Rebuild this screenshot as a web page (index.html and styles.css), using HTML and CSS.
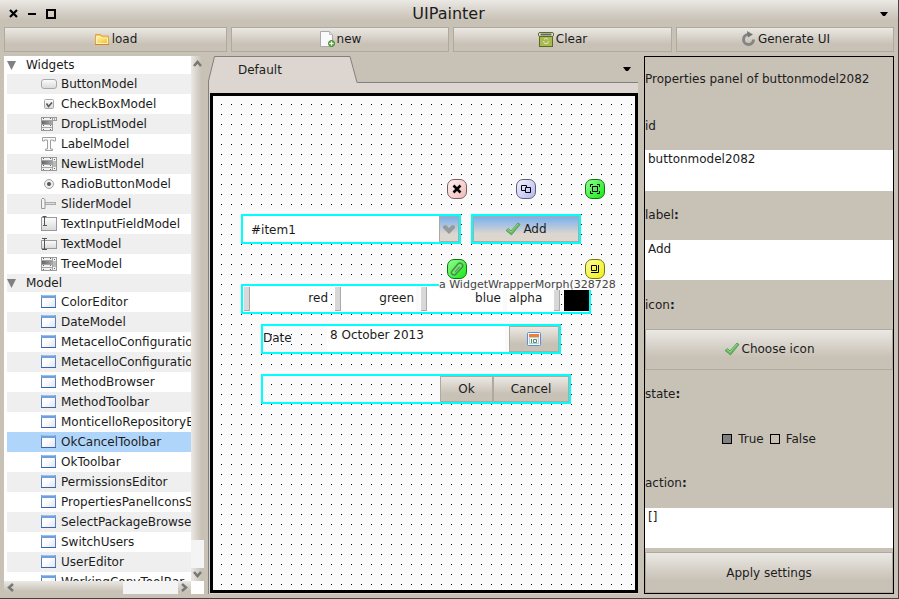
FILE: index.html
```html
<!DOCTYPE html>
<html lang="en">
<head>
<meta charset="utf-8">
<title>UIPainter</title>
<link rel="stylesheet" href="styles.css">
</head>
<body>
<svg class="defs" aria-hidden="true">
  <defs>
    <linearGradient id="silver" x1="0" y1="0" x2="0" y2="1"><stop offset="0" stop-color="#fdfdfd"/><stop offset="1" stop-color="#d8d8d8"/></linearGradient>
    <linearGradient id="pane" x1="0" y1="0" x2="1" y2="1"><stop offset="0" stop-color="#fff"/><stop offset="0.4" stop-color="#fff"/><stop offset="1" stop-color="#dde4f5"/></linearGradient>
    <linearGradient id="gold" x1="0" y1="0" x2="1" y2="1"><stop offset="0" stop-color="#fff3a8"/><stop offset="1" stop-color="#f5c02c"/></linearGradient>
    <linearGradient id="bar" x1="0" y1="0" x2="1" y2="0"><stop offset="0" stop-color="#666"/><stop offset="1" stop-color="#aaa"/></linearGradient>
  </defs>
  <symbol id="i-button" viewBox="0 0 16 16"><rect x="0.5" y="3.5" width="15" height="9" rx="2.5" fill="url(#silver)" stroke="#a8a8a8"/></symbol>
  <symbol id="i-check" viewBox="0 0 16 16"><rect x="3.5" y="3.5" width="9" height="9" rx="1" fill="url(#silver)" stroke="#a8a8a8"/><path d="M5.5 7.5l2 3 3.5-4" fill="none" stroke="#555" stroke-width="1.5"/></symbol>
  <symbol id="i-list" viewBox="0 0 16 16"><rect x="0.5" y="1.5" width="15" height="13" fill="#f2f2f2" stroke="#999"/><rect x="12" y="5" width="3" height="6" fill="#bbb"/><rect x="1" y="5" width="11" height="3" fill="url(#bar)"/><path d="M1 4.500h11M1 8.500h11M1 11.500h11M11.500 2v12" stroke="#a4a4a4"/><path d="M2 2.500h1M2 9.500h1M2 13.500h1M9 2.500h1M9 9.500h1M9 13.500h1M13 3.500h1M13 12.500h1" stroke="#666"/></symbol>
  <symbol id="i-drop" viewBox="0 0 16 16"><rect x="0.5" y="1.5" width="11" height="13" fill="#f2f2f2" stroke="#999"/><rect x="11.5" y="1.5" width="4" height="3" fill="#eee" stroke="#999"/><rect x="1" y="5" width="10" height="3" fill="url(#bar)"/><path d="M1 4.500h11M1 8.500h10M1 11.500h10" stroke="#a4a4a4"/><path d="M2 2.500h1M2 9.500h1M2 13.500h1M9 2.500h1M9 9.500h1M9 13.500h1M13 3h1" stroke="#666"/></symbol>
  <symbol id="i-label" viewBox="0 0 16 16"><path d="M1.500 1.500h13v3.500h-2v-1h-3v9h2v1.500h-7v-1.500h2v-9h-3v1h-2z" fill="#fafafa" stroke="#a0a0a0"/></symbol>
  <symbol id="i-radio" viewBox="0 0 16 16"><circle cx="8" cy="8" r="4.5" fill="#eee" stroke="#a0a0a0"/><circle cx="8" cy="8" r="2" fill="#555"/></symbol>
  <symbol id="i-slider" viewBox="0 0 16 16"><path d="M0.500 3.500l1.500-1.500 2 1.500v9h-3.500z" fill="#f4f4f4" stroke="#999"/><rect x="4.5" y="6.5" width="10" height="2" fill="#ddd" stroke="#aaa"/></symbol>
  <symbol id="i-field" viewBox="0 0 16 16"><rect x="0.5" y="1.5" width="15" height="13" fill="url(#silver)" stroke="#999"/><path d="M1.500 0.500h4M3.500 1v8M2 9.500h4" fill="none" stroke="#555"/></symbol>
  <symbol id="i-text" viewBox="0 0 16 16"><rect x="0.5" y="4.5" width="15" height="8" fill="url(#silver)" stroke="#999"/><path d="M1 2.500h5M3.500 3v10M1 13.500h5" fill="none" stroke="#555"/></symbol>
  <symbol id="i-window" viewBox="0 0 16 16"><rect x="0.5" y="1.5" width="14" height="12" fill="url(#pane)" stroke="#5a7fb8"/><rect x="0" y="1" width="15" height="3" fill="#6f9fdc"/><path d="M1 1.500h13" stroke="#9ec0ec"/><path d="M0 13.500h15" stroke="#3f62a0"/></symbol>
  <symbol id="i-tick" viewBox="0 0 16 16"><path d="M1 9.500l2.500-2 2.500 2.500 7-8 2 1.500-8.500 10.500z" fill="#68bd60" stroke="#3f8f40" stroke-width="0.7"/><path d="M2.500 9l1-.5 2.500 2.500 7-8" fill="none" stroke="#a5dc9d" stroke-width="0.7"/></symbol>
</svg>

<div class="window">
  <header class="titlebar">
    <div class="controls">
      <button type="button" aria-label="Close"><svg width="9" height="9" viewBox="0 0 9 9"><path d="M1 1l7 7M8 1l-7 7" stroke="#000" stroke-width="2.200"/></svg></button>
      <button type="button" aria-label="Minimize"><svg width="8" height="8" viewBox="0 0 8 8"><path d="M0 4h8" stroke="#000" stroke-width="2"/></svg></button>
      <button type="button" aria-label="Maximize"><svg width="10" height="10" viewBox="0 0 10 10"><rect x="1" y="1" width="8" height="8" fill="none" stroke="#000" stroke-width="2"/></svg></button>
    </div>
    <h1>UIPainter</h1>
    <button type="button" class="menu" aria-label="Window menu"><svg width="8" height="4" viewBox="0 0 8 4"><path d="M0 0h8l-3 4h-2z"/></svg></button>
  </header>

  <nav class="toolbar">
    <button type="button" class="btn"><svg width="16" height="16" viewBox="0 0 16 16"><path d="M1.500 3.500h5l1 1.500h7v8.500h-13z" fill="#f3c95c" stroke="#e0a83c"/><path d="M2.500 5.500h4l1.500 1.500h5.500v5.500h-11z" fill="url(#gold)" stroke="#fff1b8"/><path d="M1 13.500h14" stroke="#d5832a"/></svg>load</button>
    <button type="button" class="btn"><svg width="16" height="16" viewBox="0 0 16 16"><path d="M1.500 .5h9l3 3v12h-12z" fill="#fafafa" stroke="#aaa"/><path d="M10.500 .5v3h3" fill="#ddd" stroke="#bbb"/><circle cx="12.5" cy="12.5" r="3" fill="#78b860" stroke="#3d7f2e"/><path d="M10.500 12.500h4M12.500 10.500v4" stroke="#fff"/></svg>new</button>
    <button type="button" class="btn"><svg width="16" height="16" viewBox="0 0 16 16"><rect x="1.5" y="4.5" width="13" height="11" fill="#a9ba50" stroke="#5c6b23"/><rect x="0.5" y="1.5" width="15" height="4" rx="1.5" fill="#e8ecd8" stroke="#5c6b23"/><path d="M2.500 3.500h11" stroke="#666" stroke-width="2"/><path d="M6 8.500l2-1.500 2 1.500M10.500 10l-1 2.500h-3l-1-2.500" fill="none" stroke="#e0e8b0"/></svg>Clear</button>
    <button type="button" class="btn"><svg width="16" height="16" viewBox="0 0 16 16"><path d="M8 3.500a5 5 0 1 0 5.500 5" fill="none" stroke="#858585" stroke-width="3"/><path d="M7 0l6 3.500-5 3z" fill="#777"/></svg>Generate UI</button>
  </nav>

  <main class="panes">
    <section class="browser" aria-label="Components">
      <div class="tree">
        <ul class="items">
          <li class="group"><svg width="10" height="9" viewBox="0 0 10 9"><path d="M0 0h9l-4.500 9z" fill="#808080"/></svg>Widgets</li>
          <li><svg><use href="#i-button"/></svg>ButtonModel</li>
          <li><svg><use href="#i-check"/></svg>CheckBoxModel</li>
          <li><svg><use href="#i-drop"/></svg>DropListModel</li>
          <li><svg><use href="#i-label"/></svg>LabelModel</li>
          <li><svg><use href="#i-list"/></svg>NewListModel</li>
          <li><svg><use href="#i-radio"/></svg>RadioButtonModel</li>
          <li><svg><use href="#i-slider"/></svg>SliderModel</li>
          <li><svg><use href="#i-field"/></svg>TextInputFieldModel</li>
          <li><svg><use href="#i-text"/></svg>TextModel</li>
          <li><svg><use href="#i-list"/></svg>TreeModel</li>
          <li class="group"><svg width="10" height="9" viewBox="0 0 10 9"><path d="M0 0h9l-4.500 9z" fill="#808080"/></svg>Model</li>
          <li><svg><use href="#i-window"/></svg>ColorEditor</li>
          <li><svg><use href="#i-window"/></svg>DateModel</li>
          <li><svg><use href="#i-window"/></svg>MetacelloConfigurationBrowser</li>
          <li><svg><use href="#i-window"/></svg>MetacelloConfigurationEditor</li>
          <li><svg><use href="#i-window"/></svg>MethodBrowser</li>
          <li><svg><use href="#i-window"/></svg>MethodToolbar</li>
          <li><svg><use href="#i-window"/></svg>MonticelloRepositoryBrowser</li>
          <li class="selected"><svg><use href="#i-window"/></svg>OkCancelToolbar</li>
          <li><svg><use href="#i-window"/></svg>OkToolbar</li>
          <li><svg><use href="#i-window"/></svg>PermissionsEditor</li>
          <li><svg><use href="#i-window"/></svg>PropertiesPanelIconsSelector</li>
          <li><svg><use href="#i-window"/></svg>SelectPackageBrowser</li>
          <li><svg><use href="#i-window"/></svg>SwitchUsers</li>
          <li><svg><use href="#i-window"/></svg>UserEditor</li>
          <li><svg><use href="#i-window"/></svg>WorkingCopyToolBar</li>
        </ul>
      </div>
      <div class="vscroll">
        <svg width="9" height="7" viewBox="0 0 9 7"><path d="M1 6l3.500-4 3.500 4" fill="none" stroke="#777" stroke-width="2.500"/></svg>
        <span class="thumb"></span>
        <svg width="9" height="7" viewBox="0 0 9 7"><path d="M1 1l3.500 4 3.500-4" fill="none" stroke="#777" stroke-width="2.500"/></svg>
      </div>
      <div class="hscroll">
        <svg width="7" height="9" viewBox="0 0 7 9"><path d="M6 1l-4 3.500 4 3.500" fill="none" stroke="#777" stroke-width="2.500"/></svg>
        <span class="thumb"></span>
        <svg width="7" height="9" viewBox="0 0 7 9"><path d="M1 1l4 3.500-4 3.500" fill="none" stroke="#777" stroke-width="2.500"/></svg>
      </div>
      <div class="corner"></div>
    </section>

    <section class="editor" aria-label="Canvas">
      <div class="tabs">
        <button type="button" class="tab"><svg width="150" height="27" viewBox="0 0 150 27"><path d="M0.500 27v-2l6-24.500h135.500l7 25.500v1z" fill="#ddd6d0"/><path d="M0.500 27v-2l6-24.500h135.500l7 26h1" fill="none" stroke="#808080"/></svg><span>Default</span></button>
        <button type="button" class="menu" aria-label="Tab menu"><svg width="8" height="4" viewBox="0 0 8 4"><path d="M0 0h8l-3 4h-2z"/></svg></button>
      </div>
      <div class="page">
        <div class="canvas">
          <div class="morph m-drop">
            <select aria-label="Item"><option>#item1</option></select>
            <span class="droparrow"><svg width="12" height="9" viewBox="0 0 12 9"><path d="M0 1l3-1 3 3 3-3 3 1v2l-6 6-6-6z" fill="#999"/></svg></span>
          </div>
          <div class="morph m-add"><button type="button" class="btn blue"><svg width="16" height="16"><use href="#i-tick"/></svg>Add</button></div>
          <div class="morph m-color">
            <label class="slide">red<input type="range" value="0"></label>
            <label class="slide">green<input type="range" value="0"></label>
            <label class="slide">blue<input type="range" value="0"></label>
            <label class="slide start">alpha<input type="range" value="100"></label>
            <span class="swatch"></span>
          </div>
          <div class="morph m-date">
            <label for="date">Date</label>
            <input id="date" type="text" value="8 October 2013">
            <button type="button" class="btn" aria-label="Pick a date"><svg width="14" height="14" viewBox="0 0 14 14"><rect x="0.5" y="0.5" width="13" height="13" rx="1" fill="#f2f7ff" stroke="#5d8fd0"/><rect x="2" y="2" width="10" height="3" fill="#f08038"/><path d="M2 5.500h10M2 11.500h10M2.500 5v6.500M11.500 5v6.500" stroke="#bdccd8"/><path d="M4.500 7v4M6.500 7.500h3v3h-3z" fill="none" stroke="#4c9350"/></svg></button>
          </div>
          <div class="morph m-ok">
            <button type="button" class="btn ok">Ok</button>
            <button type="button" class="btn cancel">Cancel</button>
          </div>
          <button type="button" class="halo h-close" aria-label="Delete"><svg width="10" height="10" viewBox="0 0 10 10"><path d="M1.500 1.500l7 7M8.500 1.500l-7 7" stroke="#000" stroke-width="2.500"/></svg></button>
          <button type="button" class="halo h-copy" aria-label="Duplicate"><svg width="12" height="10" viewBox="0 0 12 10"><path d="M5.500 6.500h-4v-5h5v2M5.500 3.500h5v5h-5z" fill="none" stroke="#000"/></svg></button>
          <button type="button" class="halo h-size" aria-label="Resize"><svg width="10" height="10" viewBox="0 0 10 10"><path d="M2.500 2.500h5v5h-5zM.5 3v-2.500h2.500M7 .5h2.500v2.500M9.500 7v2.500h-2.500M3 9.500h-2.500v-2.500" fill="none" stroke="#000"/></svg></button>
          <button type="button" class="halo h-edit" aria-label="Attach"><svg width="14" height="14" viewBox="0 0 14 14"><path d="M2 12a2 2 0 0 1 0-3l6-7a2.500 2.500 0 0 1 4 3.500l-6 6.500a2.500 2.500 0 0 1-4 0zM4.500 10l5-5.500" fill="none" stroke="#4c8a4c" stroke-width="1.500"/><path d="M3 11l7-8" stroke="#a8d8a8"/></svg></button>
          <button type="button" class="halo h-scale" aria-label="Scale"><svg width="10" height="10" viewBox="0 0 10 10"><path d="M1.500 1.500h5v5h-5zM8.500 1v7.500h-7.500" fill="none" stroke="#000"/></svg></button>
          <span class="caption">a WidgetWrapperMorph(328728</span>
        </div>
      </div>
    </section>

    <form class="props">
      <h2>Properties panel of buttonmodel2082</h2>
      <label for="p-id">id</label>
      <textarea id="p-id">buttonmodel2082</textarea>
      <label for="p-label">label<b>:</b></label>
      <textarea id="p-label">Add</textarea>
      <span class="cap">icon<b>:</b></span>
      <button type="button" class="btn"><svg width="16" height="16"><use href="#i-tick"/></svg>Choose icon</button>
      <span class="cap">state<b>:</b></span>
      <div class="choices">
        <label><input type="radio" name="state" checked>True</label>
        <label><input type="radio" name="state">False</label>
      </div>
      <label for="p-action">action<b>:</b></label>
      <textarea id="p-action">[]</textarea>
      <button type="button" class="btn">Apply settings</button>
    </form>
  </main>
</div>
</body>
</html>
```
FILE: styles.css
```css
* { box-sizing: border-box; }

body {
  margin: 0;
  font: 12px/20px "DejaVu Sans", sans-serif;
  color: #1c1c1c;
}

button, input, select, textarea {
  margin: 0;
  padding: 0;
  border: 0;
  border-radius: 0;
  background: none;
  font: inherit;
  color: inherit;
}

.defs { position: absolute; width: 0; height: 0; }

.window {
  height: 100vh;
  display: flex;
  flex-direction: column;
  background: linear-gradient(#ebe9e4, #c8c1b6 20px);
  border-right: 1px solid #444;
  border-bottom: 1px solid #444;
}

.titlebar {
  flex: none;
  height: 27px;
  padding: 0 10px 0 9px;
  display: grid;
  grid-template-columns: 1fr auto 1fr;
  align-items: center;
}
.titlebar button { display: flex; align-items: center; }
.titlebar .menu { justify-self: end; }
.controls { display: flex; gap: 10px; }
h1 { margin: 0; font-size: 16px; font-weight: normal; }

.toolbar {
  flex: none;
  height: 25px;
  margin: 0 4px 4px;
  display: grid;
  grid-template-columns: 223fr 218fr 219fr 218fr;
  gap: 4px;
}

.btn {
  display: flex;
  align-items: center;
  justify-content: center;
  gap: 2px;
  border: 1px solid #b0a99e;
  background: linear-gradient(#ebe9e4, #c8c1b6 70%);
}
.toolbar .btn { padding-bottom: 2px; }
.btn.blue { background: linear-gradient(#78b0f0, #dcd6cf 70%); }

.panes {
  flex: 1;
  min-height: 0;
  margin: 0 4px 4px;
  display: grid;
  grid-template-columns: 200px 1fr 250px;
}

.browser {
  min-height: 0;
  display: grid;
  grid-template: 1fr 13px / 1fr 13px;
}
.tree { overflow: hidden; padding-left: 3px; background: #fff; }
.items { margin: 0; padding: 0; list-style: none; }
.items li {
  height: 20px;
  padding-left: 34px;
  display: flex;
  align-items: center;
  gap: 4px;
  white-space: nowrap;
}
.items li svg { flex: none; width: 16px; height: 16px; }
.items li:nth-child(even) { background: #efefef; }
.items li.group { height: 18px; padding-left: 0; gap: 9px; }
.items li.group svg { width: 10px; height: 9px; }
.items li.selected { background: #b0d5fa; }

.vscroll, .hscroll { display: flex; align-items: center; justify-content: space-between; }
.vscroll {
  flex-direction: column;
  padding: 4px 0 3px;
  background: linear-gradient(90deg, #ebe9e4, #c8c1b6 80%);
}
.vscroll .thumb { width: 13px; height: 28px; margin: auto 0 3px; background: #f4f4f4; }
.hscroll { padding: 0 3px; background: linear-gradient(#ebe9e4, #c8c1b6 80%); }
.hscroll .thumb { width: 55px; height: 13px; margin: 0 3px 0 auto; background: #f4f4f4; }
.corner { background: #fff; }

.editor { margin: 0 6px 0 4px; display: flex; flex-direction: column; }
.tabs {
  flex: none;
  height: 27px;
  display: flex;
  align-items: center;
  justify-content: space-between;
  border-bottom: 1px solid #808080;
}
.tab { display: grid; align-self: flex-start; text-align: left; }
.tab svg, .tab span { grid-area: 1 / 1; }
.tab span { padding: 4px 0 0 30px; }
.tabs .menu { display: flex; padding: 0 7px 0 4px; }
.page {
  flex: 1;
  display: flex;
  padding: 10px 0 1px 1px;
  background: #ddd6d0;
  border-left: 1px solid #808080;
}
.canvas {
  flex: 1;
  position: relative;
  border: 3px solid #000;
  background:
    linear-gradient(90deg, transparent 1px, #fafafa 1px) 8px 8px / 10px 10px,
    linear-gradient(#000 1px, #fafafa 1px) 8px 8px / 10px 10px;
}

.morph { position: absolute; height: 30px; display: flex; border: 2px solid #0ff; }
.m-drop { left: 28px; top: 118px; width: 220px; background: #fff; }
.m-drop select { flex: 1; appearance: none; padding: 2px 0 0 8px; }
.droparrow {
  width: 20px;
  display: flex;
  align-items: center;
  justify-content: center;
  border: 1px solid #b0a99e;
  background: linear-gradient(#78b0f0, #dcd6cf 70%);
}
.m-add { left: 258px; top: 118px; width: 110px; }
.m-add .btn { flex: 1; }

.m-color {
  left: 28px;
  top: 188px;
  width: 350px;
  display: grid;
  grid-template-columns: 87fr 82fr 83fr 53fr 25fr;
  gap: 4px;
}
.slide {
  display: grid;
  align-items: center;
  justify-items: end;
  padding: 0 2px 2px;
  position: relative;
  z-index: 0;
}
.slide.start { justify-items: start; }
.slide input {
  position: absolute;
  inset: 0;
  z-index: -1;
  width: 100%;
  height: 26px;
  padding: 0 0 0 1px;
  appearance: none;
  background: #fff;
}
.slide input::-webkit-slider-thumb {
  appearance: none;
  width: 6px;
  height: 24px;
  background: #d8d8d8;
  border-right: 1px solid #aaa;
  border-bottom: 1px solid #aaa;
}
.swatch { height: 24px; margin-top: 1px; background: #000; }

.m-date { left: 48px; top: 228px; width: 300px; }
.m-date label { width: 64px; padding-top: 2px; }
.m-date input { flex: 1; min-width: 0; height: 26px; margin-right: 4px; padding: 0 3px 8px; background: #fff; }
.m-date .btn { width: 50px; }

.m-ok { left: 48px; top: 278px; width: 310px; justify-content: flex-end; }
.ok { width: 53px; }
.cancel { width: 76px; }

.halo {
  position: absolute;
  width: 20px;
  height: 20px;
  display: flex;
  align-items: center;
  justify-content: center;
  border: 1px solid;
  border-radius: 7px;
}
.h-close { left: 234px; top: 83px; background: linear-gradient(135deg, #fff0f0, #f0b8b8); border-color: #786060; }
.h-copy { left: 303px; top: 83px; background: linear-gradient(135deg, #f0f0ff, #b8b8f0); border-color: #606078; }
.h-size { left: 372px; top: 83px; background: linear-gradient(135deg, #90ff90, #18e818); border-color: #087808; }
.h-edit { left: 234px; top: 163px; background: linear-gradient(135deg, #90ff90, #18e818); border-color: #087808; }
.h-scale { left: 372px; top: 163px; background: linear-gradient(135deg, #fcfc98, #f0f018); border-color: #787808; }
.caption {
  position: absolute;
  left: 226px;
  top: 184px;
  font-size: 11px;
  line-height: 10px;
  white-space: nowrap;
  background: #fafafa;
  color: #444;
}

.props {
  min-height: 0;
  display: grid;
  grid-template-rows: 45fr repeat(11, 41fr);
  gap: 4px;
  align-items: center;
  border: 1px solid #000;
  white-space: nowrap;
}
h2 { margin: 0; font-size: 12px; font-weight: normal; }
.props textarea {
  display: block;
  width: 100%;
  height: 100%;
  padding: 0 3px;
  line-height: 18px;
  background: #fff;
  resize: none;
  overflow: hidden;
}
.props .btn { height: 100%; }
.choices { display: flex; justify-content: center; gap: 6px; }
.choices label { display: flex; align-items: center; gap: 6px; }
.choices input { appearance: none; width: 10px; height: 10px; border: 1px solid #000; }
.choices input:checked { background: #808080; }
```
